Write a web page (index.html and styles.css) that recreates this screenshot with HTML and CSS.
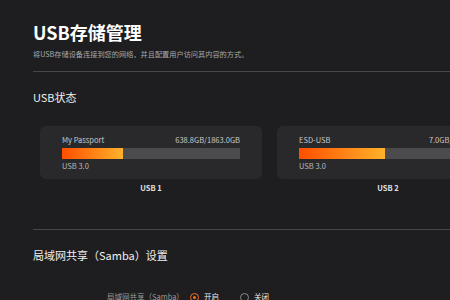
FILE: index.html
```html
<!DOCTYPE html>
<html lang="zh-CN">
<head>
  <meta charset="UTF-8" />
  <title>USB存储管理</title>
  <link rel="stylesheet" href="styles.css">
</head>
<body>
  <div class="page">
    <h1>USB存储管理</h1>
    <p class="desc">将USB存储设备连接到您的网络，并且配置用户访问其内容的方式。</p>
    <div class="divider"></div>

    <h2 class="usb-title">USB状态</h2>
    <div class="cards">
      <div class="usb">
        <div class="card">
          <div class="card-head">
            <span>My Passport</span>
            <span>638.8GB/1863.0GB</span>
          </div>
          <div class="track"><div class="fill" style="width: 34.3%"></div></div>
          <div class="card-foot">USB 3.0</div>
        </div>
        <div class="usb-name">USB 1</div>
      </div>
      <div class="usb">
        <div class="card">
          <div class="card-head">
            <span>ESD-USB</span>
            <span>7.0GB/14.5GB</span>
          </div>
          <div class="track"><div class="fill" style="width: 48.3%"></div></div>
          <div class="card-foot">USB 3.0</div>
        </div>
        <div class="usb-name">USB 2</div>
      </div>
    </div>

    <div class="divider second"></div>
    <h2 class="samba-title">局域网共享（Samba）设置</h2>
    <div class="option-row">
      <span class="option-label">局域网共享（Samba）</span>
      <label class="radio"><span class="dot on"></span>开启</label>
      <label class="radio"><span class="dot"></span>关闭</label>
    </div>
  </div>
</body>
</html>
```

FILE: styles.css
```css
body {
  margin: 0;
  font-family: "Noto Sans CJK SC", "Noto Sans", sans-serif;
  background: #1e1e20;
  color: #e8e8e8;
  width: 450px;
  height: 300px;
  overflow: hidden;
}

.page {
  padding: 20px 0 0 33px;
}

h1 {
  margin: 0;
  font-size: 18px;
  line-height: 24px;
  font-weight: bold;
  color: #ffffff;
}

.desc {
  margin: 4px 0 0;
  font-size: 7.2px;
  line-height: 12px;
  color: #a8a8a8;
  white-space: nowrap;
}

.divider {
  height: 1px;
  background: #47474a;
  margin-top: 11px;
}

h2 {
  margin: 0;
  font-size: 11px;
  line-height: 16px;
  font-weight: normal;
  color: #f0f0f0;
}

.usb-title {
  margin-top: 17px;
}

.cards {
  display: flex;
  gap: 15px;
  margin: 21px 0 0 7px;
}

.usb {
  flex: 0 0 222px;
}

.card {
  background: #29292c;
  border-radius: 6px;
  padding: 8px 22px 7px;
  box-sizing: border-box;
  height: 53px;
}

.card-head {
  display: flex;
  justify-content: space-between;
  font-size: 7.5px;
  line-height: 12px;
  color: #c8c8c8;
}

.track {
  margin-top: 2px;
  height: 11px;
  background: #4b4b4d;
}

.fill {
  height: 100%;
  background: linear-gradient(to right, #ff4e00, #ffb22a);
}

.card-foot {
  margin-top: 1px;
  font-size: 7.5px;
  line-height: 12px;
  color: #b8b8b8;
}

.usb-name {
  margin-top: 3px;
  text-align: center;
  font-size: 7.5px;
  line-height: 12px;
  font-weight: bold;
  color: #e0e0e0;
}

.divider.second {
  margin-top: 35px;
}

.samba-title {
  margin-top: 17px;
}

.option-row {
  display: flex;
  align-items: center;
  margin: 28px 0 0 74px;
  font-size: 7.5px;
  line-height: 12px;
}

.option-label {
  color: #9a9a9a;
  width: 83px;
}

.radio {
  display: flex;
  align-items: center;
  gap: 5px;
  color: #f0f0f0;
  width: 50px;
}

.dot {
  width: 7px;
  height: 7px;
  border: 1px solid #8a8a8a;
  border-radius: 50%;
  box-sizing: content-box;
  position: relative;
}

.dot.on {
  border-color: #ff6a1a;
}

.dot.on::after {
  content: "";
  position: absolute;
  left: 2px;
  top: 2px;
  width: 3px;
  height: 3px;
  border-radius: 50%;
  background: #ff6a1a;
}
```
